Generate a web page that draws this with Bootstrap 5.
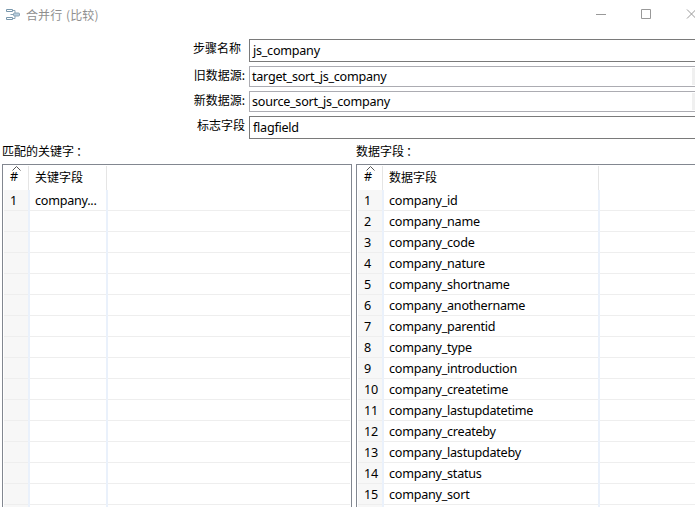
<!DOCTYPE html>
<html lang="zh-CN">
<head>
<meta charset="utf-8">
<title>合并行 (比较)</title>
<link href="https://cdn.jsdelivr.net/npm/bootstrap@5.3.0/dist/css/bootstrap.min.css" rel="stylesheet">
<style>
body{height:507px;background:#fff;color:#000;font:12.6px/20px "Noto Sans","Noto Sans CJK SC",sans-serif;letter-spacing:-.25px}
.cjk{font-family:"Noto Sans CJK SC",sans-serif;font-size:12px;letter-spacing:0}
.titlebar{height:30px;padding-left:6px;color:#8f8f8f}
.titlebar .caption{margin-left:5px;font-size:12px;word-spacing:1px;letter-spacing:.1px;line-height:18px;padding-bottom:1px}
.controls{width:99px;height:30px}
.form-area{height:109px;padding-top:9px}
.line{height:21px;margin-bottom:4px}
.line.tall{height:23px}
.line label{width:245px;line-height:17px}
.line.tall label{line-height:17px}
.line.first label{padding-right:4px;line-height:18px}
.field{margin-left:4px;border:1px solid #acacb2;border-right:0;padding-left:2px;line-height:19px}
.tall .field{border-color:#7a7a7a;line-height:21px;padding-left:3px}
.arrow{width:3px;margin:1px 0;background:#f0f0f0}
.list-title{height:25px;line-height:23px}
.colon{display:inline-block;width:12px;padding-left:2px}
.sheet{border:1px solid #828790;border-bottom:0;padding:1px 1px 0 1px}
.sheet.last{border-right:0;padding-right:0}
.hd{height:24px}
.hd>div{border-right:1px solid #e5e5e5;line-height:22px;margin-right:1px}
.hd>div:last-child,.rw>div:last-child{border:0}
.rw{height:21px;border-bottom:1px solid #eee}
.rw>div{border-right:2px solid #eaf1fb;height:21px;line-height:21px;white-space:nowrap;padding-left:5px}
.hd .c1,.rw .c1{width:26px;flex:none;padding-left:6px;letter-spacing:-.1px}
.rw .c1{background:linear-gradient(#f7f7f7 20px,#eee 20px)}
.hd .c1{width:25px}
.c2{width:78px;flex:none}
.hd .c2{width:77px;padding-left:5px}
.wide .rw .c2{width:216px}
.wide .hd .c2{width:215px}
.sort{left:8px;top:0}
</style>
<script src="https://cdn.jsdelivr.net/npm/bootstrap@5.3.0/dist/js/bootstrap.bundle.min.js"></script>
</head>
<body class="overflow-hidden d-flex flex-column">
<header class="titlebar d-flex align-items-center">
<svg width="15" height="14" viewBox="0 0 15 14" fill="none" stroke="#8ba3b4"><path d="M.5 1.500h6v2h-6zM.5 9.500h6v2h-6z" stroke="#7897ac"/><path d="M6.500 2.500h2.500v2.500M6.500 10.500h2.500v-2.500M4.500 6.500h3"/><rect x="7.500" y="5" width="6" height="3" rx="1" fill="#b8cfdf"/></svg>
<span class="caption cjk">合并行 (比较)</span>
<svg class="controls ms-auto" viewBox="0 0 99 30" fill="none" stroke="#999"><path d="M0 14.500h10M45.500 9.500h9v9h-9zM91 9.500l9 9M91 18.500l9-9"/></svg>
</header>
<main class="flex-grow-1 d-flex flex-column">
<form class="form-area">
<div class="line tall first d-flex"><label class="cjk text-end">步骤名称</label><div class="field flex-grow-1">js_company</div></div>
<div class="line d-flex"><label class="cjk text-end">旧数据源:</label><div class="field flex-grow-1 d-flex"><span>target_sort_js_company</span><i class="arrow ms-auto"></i></div></div>
<div class="line d-flex"><label class="cjk text-end">新数据源:</label><div class="field flex-grow-1 d-flex"><span>source_sort_js_company</span><i class="arrow ms-auto"></i></div></div>
<div class="line tall d-flex"><label class="cjk text-end">标志字段</label><div class="field flex-grow-1">flagfield</div></div>
</form>
<div class="d-flex flex-grow-1">
<section class="d-flex flex-column" style="width:350px;margin-left:2px">
<div class="list-title cjk">匹配的关键字<span class="colon">：</span></div>
<div class="sheet flex-grow-1" id="keys"></div>
</section>
<section class="d-flex flex-column flex-grow-1" style="margin-left:4px">
<div class="list-title cjk">数据字段<span class="colon">：</span></div>
<div class="sheet last wide flex-grow-1" id="fields"></div>
</section>
</div>
</main>
<script>
function fill(id, title, names){
  let html = `<div class="hd d-flex"><div class="c1 position-relative"><svg class="sort position-absolute" width="9" height="5" fill="none" stroke="#555"><path d="M.5 4.500l4-4 4 4"/></svg>#</div><div class="c2 cjk">${title}</div><div></div></div>`;
  for(let i=0;i<16;i++)
    html += `<div class="rw d-flex"><div class="c1">${names[i]?i+1:''}</div><div class="c2">${names[i]||''}</div><div></div></div>`;
  document.getElementById(id).innerHTML = html;
}
fill('keys','关键字段',['company...']);
fill('fields','数据字段',['id','name','code','nature','shortname','anothername','parentid','type','introduction','createtime','lastupdatetime','createby','lastupdateby','status','sort'].map(n=>'company_'+n));
</script>
</body>
</html>
